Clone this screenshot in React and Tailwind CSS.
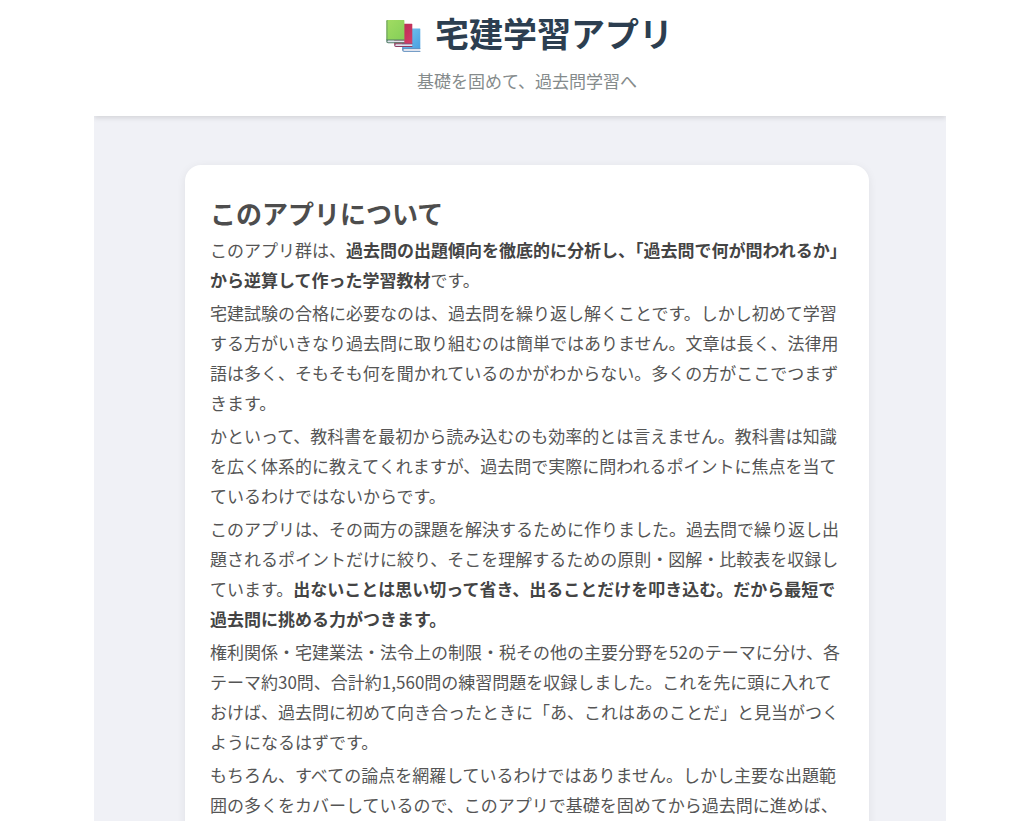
import React from 'react';

const paragraphs = [
  [
    { text: 'このアプリ群は、' },
    { text: '過去問の出題傾向を徹底的に分析し、「過去問で何が問われるか」から逆算して作った学習教材', strong: true },
    { text: 'です。' },
  ],
  [
    {
      text: '宅建試験の合格に必要なのは、過去問を繰り返し解くことです。しかし初めて学習する方がいきなり過去問に取り組むのは簡単ではありません。文章は長く、法律用語は多く、そもそも何を聞かれているのかがわからない。多くの方がここでつまずきます。',
    },
  ],
  [
    {
      text: 'かといって、教科書を最初から読み込むのも効率的とは言えません。教科書は知識を広く体系的に教えてくれますが、過去問で実際に問われるポイントに焦点を当てているわけではないからです。',
    },
  ],
  [
    {
      text: 'このアプリは、その両方の課題を解決するために作りました。過去問で繰り返し出題されるポイントだけに絞り、そこを理解するための原則・図解・比較表を収録しています。',
    },
    { text: '出ないことは思い切って省き、出ることだけを叩き込む。だから最短で過去問に挑める力がつきます。', strong: true },
  ],
  [
    {
      text: '権利関係・宅建業法・法令上の制限・税その他の主要分野を52のテーマに分け、各テーマ約30問、合計約1,560問の練習問題を収録しました。これを先に頭に入れておけば、過去問に初めて向き合ったときに「あ、これはあのことだ」と見当がつくようになるはずです。',
    },
  ],
  [
    {
      text: 'もちろん、すべての論点を網羅しているわけではありません。しかし主要な出題範囲の多くをカバーしているので、このアプリで基礎を固めてから過去問に進めば、',
    },
  ],
];

// back to front
const books = [
  { id: 'blue', x: 21.2, y: 14.6, from: '#78c8f2', to: '#4a9fe0', edge: '#4a7fb5' },
  { id: 'red', x: 13.2, y: 9.8, from: '#b02850', to: '#d63e68', edge: '#8f3a62' },
  { id: 'green', x: 5.3, y: 6, from: '#a2dc62', to: '#84cf58', edge: '#4f7a66' },
];

function BooksIcon() {
  return (
    <svg viewBox="0 0 40 38" className="h-[38px] w-10 shrink-0" aria-hidden="true">
      {books.map((b) => (
        <g key={b.id} transform={`translate(${b.x} ${b.y})`}>
          <linearGradient id={b.id} x1="0" y1="0" x2="1" y2="1">
            <stop offset="0" stopColor={b.from} />
            <stop offset="1" stopColor={b.to} />
          </linearGradient>
          <path d="M0 1.2C0 .4.5 0 1.3 0H17.6q.5 0 .5.5V20H0z" fill={`url(#${b.id})`} />
          <path d="M0 1.2C0 .4.5 0 1.3 0V20H0z" fill={b.edge} opacity="0.5" />
          <path d="M1 20.4h17v2H1z" fill="#dfe3ee" />
          <path d="M18.2 19.6v.9H2q-.9 0-.9.9t.9.9h16.2v.9H1.8Q0 23.200 0 21.400V19.600z" fill={b.edge} />
        </g>
      ))}
    </svg>
  );
}

function Header() {
  return (
    <header className="relative bg-white pt-[6px] pb-5 pl-[14px] text-center shadow-[0_2px_5px_rgba(0,0,0,0.12)]">
      <h1 className="flex items-center justify-center gap-[14px] text-[34px] leading-[54px] font-bold text-[#2c3e50]">
        <BooksIcon />
        宅建学習アプリ
      </h1>
      <p className="mt-[6px] text-[17px] leading-[30px] text-[#858b8c]">基礎を固めて、過去問学習へ</p>
    </header>
  );
}

function AboutCard() {
  return (
    <section className="mx-auto max-w-[684px] rounded-2xl bg-white p-[25px] shadow-[0_2px_10px_rgba(0,0,0,0.07)]">
      <h2 className="text-[26px] leading-[45px] font-bold text-[#4d4d4d]">このアプリについて</h2>
      <div className="space-y-[3px] text-[17px] leading-[30px] text-[#555]">
        {paragraphs.map((parts, i) => (
          <p key={i}>
            {parts.map((part, j) =>
              part.strong ? (
                <strong key={j} className="font-bold text-[#444]">{part.text}</strong>
              ) : (
                <span key={j}>{part.text}</span>
              )
            )}
          </p>
        ))}
      </div>
    </section>
  );
}

export default function App() {
  return (
    <div
      lang="ja"
      className="min-h-screen bg-white pr-[78px] pl-[94px] font-['Noto_Sans_CJK_JP','Noto_Sans',sans-serif]"
    >
      <div className="min-h-screen overflow-x-clip bg-[#f0f1f6]">
        <Header />
        <main className="pt-[49px] pl-[14px]">
          <AboutCard />
        </main>
      </div>
    </div>
  );
}
